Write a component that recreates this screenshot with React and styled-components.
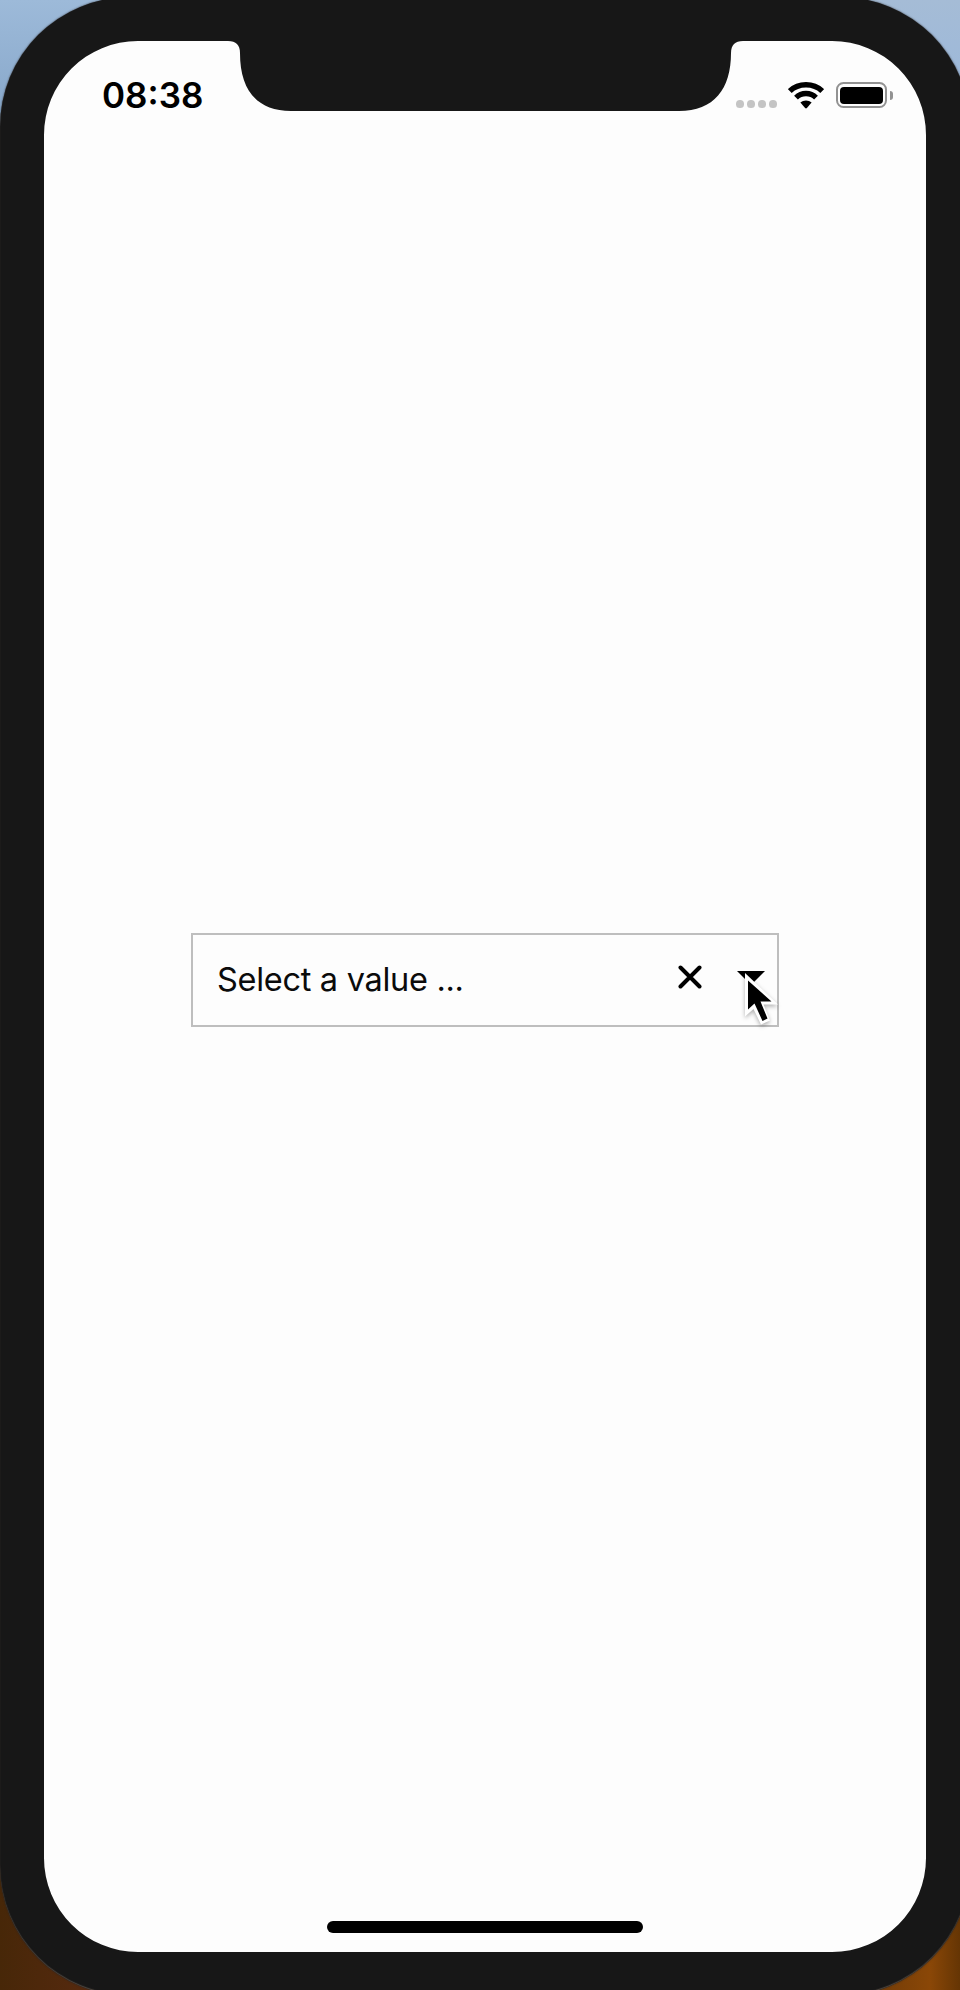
import React from "react";
import styled, { createGlobalStyle } from "styled-components";

const GlobalStyle = createGlobalStyle`
  html, body { margin: 0; padding: 0; }
  body { width: 960px; height: 1990px; overflow: hidden; }
  *, *::before, *::after { box-sizing: border-box; }
`;

const WIDTH = 882;
const HEIGHT = 1911;

/* Rounded display outline with the sensor notch cut out. */
const displayOutline = (w, h, r) =>
  [
    `M${r} 0 H184 C192 0 196 4 196 12 C196 48 212 70 247 70`,
    `H635 C670 70 687 48 687 12 C687 4 691 0 699 0`,
    `H${w - r} A${r} ${r} 0 0 1 ${w} ${r}`,
    `V${h - r} A${r} ${r} 0 0 1 ${w - r} ${h}`,
    `H${r} A${r} ${r} 0 0 1 0 ${h - r}`,
    `V${r} A${r} ${r} 0 0 1 ${r} 0 Z`,
  ].join(" ");

const Desktop = styled.div`
  display: flex;
  align-items: flex-start;
  width: 960px;
  height: 1990px;
  overflow: hidden;
  background:
    linear-gradient(90deg, #472708 0, #54290e 80px, #653608 850px, #8a4707 930px, #653504 960px) 0 100% / 960px 160px no-repeat,
    linear-gradient(180deg, #9dbad9 0, #87a7ca 120px) 0 0 / 480px 200px no-repeat,
    linear-gradient(180deg, #a5bcd6 0, #9cb8da 90px) 480px 0 / 480px 200px no-repeat,
    #171717;
`;

const Device = styled.div`
  flex: none;
  width: 970px;
  height: 1999px;
  margin-top: -3px;
  padding: 44px;
  border-radius: 130px;
  background: #171717;
  box-shadow: inset 0 -1px 1px #50473f, 0 0 2px #29282a;
`;

const Screen = styled.main`
  display: flex;
  flex-direction: column;
  width: ${WIDTH}px;
  height: ${HEIGHT}px;
  background: #fdfdfd;
  clip-path: path("${displayOutline(WIDTH, HEIGHT, 94)}");
  color: #000;
  font-family: Inter, "Liberation Sans", sans-serif;
`;

const StatusBar = styled.header`
  display: flex;
  justify-content: space-between;
  align-items: center;
  height: 108px;
  padding: 0 33.5px 0 58px;
`;

const Time = styled.time`
  font-size: 35px;
  font-weight: 600;
  line-height: 40px;
  letter-spacing: 0;
`;

const Indicators = styled.div`
  display: flex;
  align-items: center;
`;

const Signal = styled.div`
  display: flex;
  gap: 3.3px;
  margin: 18px 11.5px 0 0;
`;

const SignalDot = styled.span`
  width: 7.7px;
  height: 7.7px;
  border-radius: 50%;
  background: #c4c4c4;
`;

const WifiIcon = styled.svg`
  width: 36px;
  height: 27px;
  margin-right: 11.5px;
`;

const Battery = styled.div`
  display: flex;
  width: 51.5px;
  height: 26px;
  padding: 2.5px;
  border: 2px solid #929292;
  border-radius: 7.5px;
`;

const BatteryLevel = styled.span`
  flex: 1;
  border-radius: 4px;
  background: #000;
`;

const BatteryCap = styled.span`
  width: 3px;
  height: 9px;
  margin-left: 2.5px;
  border-radius: 0 4px 4px 0;
  background: #929292;
`;

const Content = styled.section`
  display: flex;
  flex: 1;
  justify-content: center;
  align-items: flex-start;
  padding-top: 784px;
`;

const Select = styled.div`
  position: relative;
  display: flex;
  align-items: center;
  width: 588px;
  height: 94px;
  padding: 0 12px 0 24px;
  border: 2px solid #bebebe;
`;

const Value = styled.span`
  flex: 1;
  font-size: 32.5px;
  line-height: 40px;
  letter-spacing: -0.3px;
  white-space: nowrap;
  color: #0b0b0b;
`;

const IconButton = styled.button`
  display: flex;
  padding: 0;
  border: 0;
  background: none;
  margin: ${(p) => p.$margin};
`;

const Cursor = styled.svg`
  position: absolute;
  left: 550px;
  top: 35px;
  width: 42px;
  height: 62px;
  filter: drop-shadow(0 2px 2px rgba(0, 0, 0, 0.3));
`;

const HomeArea = styled.footer`
  display: flex;
  justify-content: center;
  height: 31px;
`;

const HomeIndicator = styled.span`
  width: 316px;
  height: 12px;
  border-radius: 6px;
  background: #000;
`;

export default function App() {
  return (
    <>
      <GlobalStyle />
      <Desktop>
        <Device>
          <Screen>
            <StatusBar>
              <Time>08:38</Time>
              <Indicators>
                <Signal>
                  <SignalDot />
                  <SignalDot />
                  <SignalDot />
                  <SignalDot />
                </Signal>
                <WifiIcon viewBox="0 0 36 27">
                  <path d="M1.8 9 C10.5 .6 25.5 .6 34.2 9" fill="none" stroke="#000" strokeWidth="5.4" />
                  <path d="M8 15.6 C13.5 10.2 22.5 10.2 28 15.6" fill="none" stroke="#000" strokeWidth="5.4" />
                  <path d="M12.4 20.6 C15.4 17.8 20.6 17.8 23.6 20.6 L18.9 26 Q18 26.9 17.1 26 Z" />
                </WifiIcon>
                <Battery>
                  <BatteryLevel />
                </Battery>
                <BatteryCap />
              </Indicators>
            </StatusBar>
            <Content>
              <Select>
                <Value>Select a value ...</Value>
                <IconButton $margin="-7px 35px 0 0" aria-label="Clear">
                  <svg width="24" height="24" viewBox="0 0 24 24">
                    <path d="M2.5 2.5 L21.5 21.5 M21.5 2.5 L2.5 21.5" stroke="#000" strokeWidth="4" strokeLinecap="round" />
                  </svg>
                </IconButton>
                <IconButton $margin="-5px 0 0 0" aria-label="Open">
                  <svg width="28" height="14" viewBox="0 0 28 14">
                    <path d="M0 0 H28 L14 14 Z" />
                  </svg>
                </IconButton>
                <Cursor viewBox="0 0 42 62">
                  <path
                    d="M2 3 V46.5 L10.5 39 L18 54.5 L27 50.5 L20.5 34.5 H35 Z"
                    fill="#fff"
                  />
                  <path d="M5 10.5 V39.5 L11.5 33.5 L19.5 51 L24.5 48.5 L17.5 31.5 H28.5 Z" />
                </Cursor>
              </Select>
            </Content>
            <HomeArea>
              <HomeIndicator />
            </HomeArea>
          </Screen>
        </Device>
      </Desktop>
    </>
  );
}
